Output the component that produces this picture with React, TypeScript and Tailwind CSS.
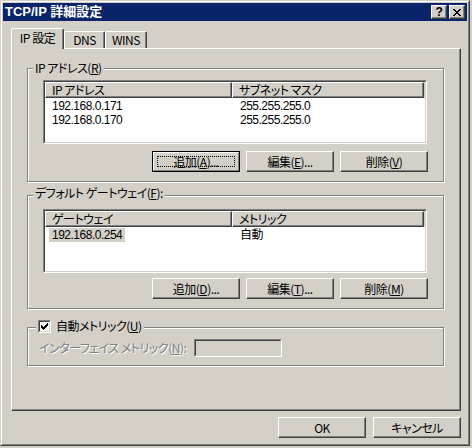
import React from "react";

const raised =
  "border border-t-white border-l-white border-r-[#404040] border-b-[#404040] shadow-[inset_-1px_-1px_0_#808080]";

const Btn = ({ children, focused }: { children: React.ReactNode; focused?: boolean }) =>
  focused ? (
    <div className="h-[21px] w-[88px] border border-black">
      <div className="relative flex h-full w-full items-center justify-center border border-t-white border-l-white border-r-[#808080] border-b-[#808080]">
        <div className="absolute inset-[3px] border border-dotted border-black" />
        <span>{children}</span>
      </div>
    </div>
  ) : (
    <div className={`flex h-[21px] w-[88px] items-center justify-center ${raised}`}>{children}</div>
  );

const Acc = ({ k }: { k: string }) => (
  <>
    (<u>{k}</u>)
  </>
);

const HeaderCell = ({ w, children }: { w: string; children: React.ReactNode }) => (
  <div className={`flex h-full items-center pl-[6px] bg-[#d4d0c8] ${w} ${raised}`}>{children}</div>
);

type Row = [string, string];

const ListView = ({ cols, rows, selected }: { cols: [string, string]; rows: Row[]; selected?: boolean }) => (
  <div className="h-[64px] w-[384px] border border-t-[#808080] border-l-[#808080] border-r-white border-b-white">
    <div className="h-full w-full border border-t-[#404040] border-l-[#404040] border-r-[#d4d0c8] border-b-[#d4d0c8] bg-white">
      <div className="flex h-[16px]">
        <HeaderCell w="w-[187px]">{cols[0]}</HeaderCell>
        <HeaderCell w="w-[192px]">{cols[1]}</HeaderCell>
        <div className="flex-1 bg-[#d4d0c8]" />
      </div>
      <div className="pt-[1px] font-['Liberation_Sans','Noto_Sans_CJK_JP',sans-serif]">
        {rows.map(([a, b], i) => (
          <div key={i} className="flex h-[14px] items-center">
            <div className="flex h-full w-[187px] items-center pl-[4px]">
              <span className={`flex h-full items-center px-[3px] ${selected && i === 0 ? "bg-[#d4d0c8]" : ""}`}>{a}</span>
            </div>
            <div className="pl-[8px]">{b}</div>
          </div>
        ))}
      </div>
    </div>
  </div>
);

const groupCls =
  "relative w-[417px] border border-[#808080] shadow-[inset_1px_1px_0_#fff,1px_1px_0_#fff]";

export default function App() {
  return (
    <div className="h-[448px] w-[472px] whitespace-nowrap bg-[#d4d0c8] text-[12px] leading-[14px] tracking-[-0.5px] text-black font-['Noto_Sans_CJK_JP',sans-serif] [font-feature-settings:'palt']">
      <div className="h-[446px] w-[470px] border border-t-[#d4d0c8] border-l-[#d4d0c8] border-r-[#404040] border-b-[#404040]">
        <div className="h-full w-full border border-t-white border-l-white border-r-[#808080] border-b-[#808080] p-[1px]">
          {/* title bar */}
          <div className="flex h-[18px] items-center bg-[#0a246a] pl-[2px] pr-[2px]">
            <span className="font-['Liberation_Sans','Noto_Sans_CJK_JP',sans-serif] text-[13px] font-bold leading-[18px] tracking-normal text-white">
              TCP/IP 詳細設定
            </span>
            <div className="ml-auto flex gap-[2px]">
              <div className={`flex h-[14px] w-[16px] items-center justify-center bg-[#d4d0c8] ${raised}`}>
                <span className="font-['Liberation_Sans',sans-serif] text-[12px] font-bold leading-[12px]">?</span>
              </div>
              <div className={`flex h-[14px] w-[16px] items-center justify-center bg-[#d4d0c8] ${raised}`}>
                <svg width="8" height="7" viewBox="0 0 8 7" shapeRendering="crispEdges">
                  <path d="M0 0h2v1h-2zM6 0h2v1h-2zM1 1h2v1h-2zM5 1h2v1h-2zM2 2h4v1h-4zM3 3h2v1h-2zM2 4h4v1h-4zM1 5h2v1h-2zM5 5h2v1h-2zM0 6h2v1h-2zM6 6h2v1h-2z" fill="#000" />
                </svg>
              </div>
            </div>
          </div>

          <div className="pl-[8px] pt-[7px]">
            {/* tabs */}
            <div className="flex h-[20px] items-end">
              <div className="relative z-10 -mb-px flex h-[21px] w-[53px] items-center justify-center rounded-tl-[2px] rounded-tr-[2px] border-l border-t border-r border-t-white border-l-white border-r-[#404040] bg-[#d4d0c8] pb-[2px] shadow-[inset_-1px_0_0_#808080]">
                IP 設定
              </div>
              <div className="flex h-[17px] w-[41px] items-center justify-center rounded-tl-[2px] rounded-tr-[2px] border-l border-t border-r border-t-white border-l-white border-r-[#404040] shadow-[inset_-1px_0_0_#808080]">
                DNS
              </div>
              <div className="flex h-[17px] w-[42px] items-center justify-center rounded-tl-[2px] rounded-tr-[2px] border-l border-t border-r border-t-white border-l-white border-r-[#404040] shadow-[inset_-1px_0_0_#808080]">
                WINS
              </div>
            </div>

            {/* panel */}
            <div className="flex h-[363px] w-[450px] flex-col border border-t-white border-l-white border-r-[#404040] border-b-[#404040] pl-[15px] pt-[19px] shadow-[inset_-1px_-1px_0_#808080]">
              {/* IP addresses */}
              <div className={`${groupCls} h-[114px]`}>
                <div className="absolute left-[5px] top-[-8px] bg-[#d4d0c8] px-[2px]">
                  IP アドレス<Acc k="R" />
                </div>
                <div className="ml-[15px] mt-[11px]">
                  <ListView
                    cols={["IP アドレス", "サブネット マスク"]}
                    rows={[
                      ["192.168.0.171", "255.255.255.0"],
                      ["192.168.0.170", "255.255.255.0"],
                    ]}
                  />
                </div>
                <div className="ml-[124px] mt-[7px] flex gap-[6px]">
                  <Btn focused>
                    追加<Acc k="A" />...
                  </Btn>
                  <Btn>
                    編集<Acc k="E" />...
                  </Btn>
                  <Btn>
                    削除<Acc k="V" />
                  </Btn>
                </div>
              </div>

              {/* default gateway */}
              <div className={`${groupCls} mt-[13px] h-[114px]`}>
                <div className="absolute left-[5px] top-[-10px] bg-[#d4d0c8] px-[2px]">
                  デフォルト ゲートウェイ<Acc k="F" />:
                </div>
                <div className="ml-[15px] mt-[13px]">
                  <ListView cols={["ゲートウェイ", "メトリック"]} rows={[["192.168.0.254", "自動"]]} selected />
                </div>
                <div className="ml-[124px] mt-[5px] flex gap-[6px]">
                  <Btn>
                    追加<Acc k="D" />...
                  </Btn>
                  <Btn>
                    編集<Acc k="T" />...
                  </Btn>
                  <Btn>
                    削除<Acc k="M" />
                  </Btn>
                </div>
              </div>

              {/* automatic metric */}
              <div className={`${groupCls} mt-[18px] h-[39px]`}>
                <div className="absolute left-[8px] top-[-9px] flex h-[14px] items-center gap-[5px] bg-[#d4d0c8] px-[2px]">
                  <div className="h-[13px] w-[13px] border border-t-[#808080] border-l-[#808080] border-r-white border-b-white">
                    <div className="flex h-full w-full items-center justify-center border border-t-[#404040] border-l-[#404040] border-r-[#d4d0c8] border-b-[#d4d0c8] bg-white">
                      <svg width="7" height="7" viewBox="0 0 7 7" shapeRendering="crispEdges">
                        <path d="M6 0h1v3h-1zM5 1h1v3h-1zM4 2h1v3h-1zM3 3h1v3h-1zM2 4h1v3h-1zM1 3h1v3h-1zM0 2h1v3h-1z" fill="#000" />
                      </svg>
                    </div>
                  </div>
                  <span>
                    自動メトリック<Acc k="U" />
                  </span>
                </div>
                <div className="ml-[11px] mt-[11px] flex items-center">
                  <span className="w-[155px] whitespace-nowrap text-[#808080] [text-shadow:1px_1px_0_#fff]">
                    インターフェイス メトリック<Acc k="N" />:
                  </span>
                  <div className="h-[18px] w-[88px] border border-t-[#808080] border-l-[#808080] border-r-white border-b-white">
                    <div className="h-full w-full border border-t-[#404040] border-l-[#404040] border-r-[#d4d0c8] border-b-[#d4d0c8]" />
                  </div>
                </div>
              </div>
            </div>

            {/* dialog buttons */}
            <div className="mt-[6px] flex w-[450px] justify-end gap-[7px]">
              <Btn>OK</Btn>
              <Btn>キャンセル</Btn>
            </div>
          </div>
        </div>
      </div>
    </div>
  );
}
